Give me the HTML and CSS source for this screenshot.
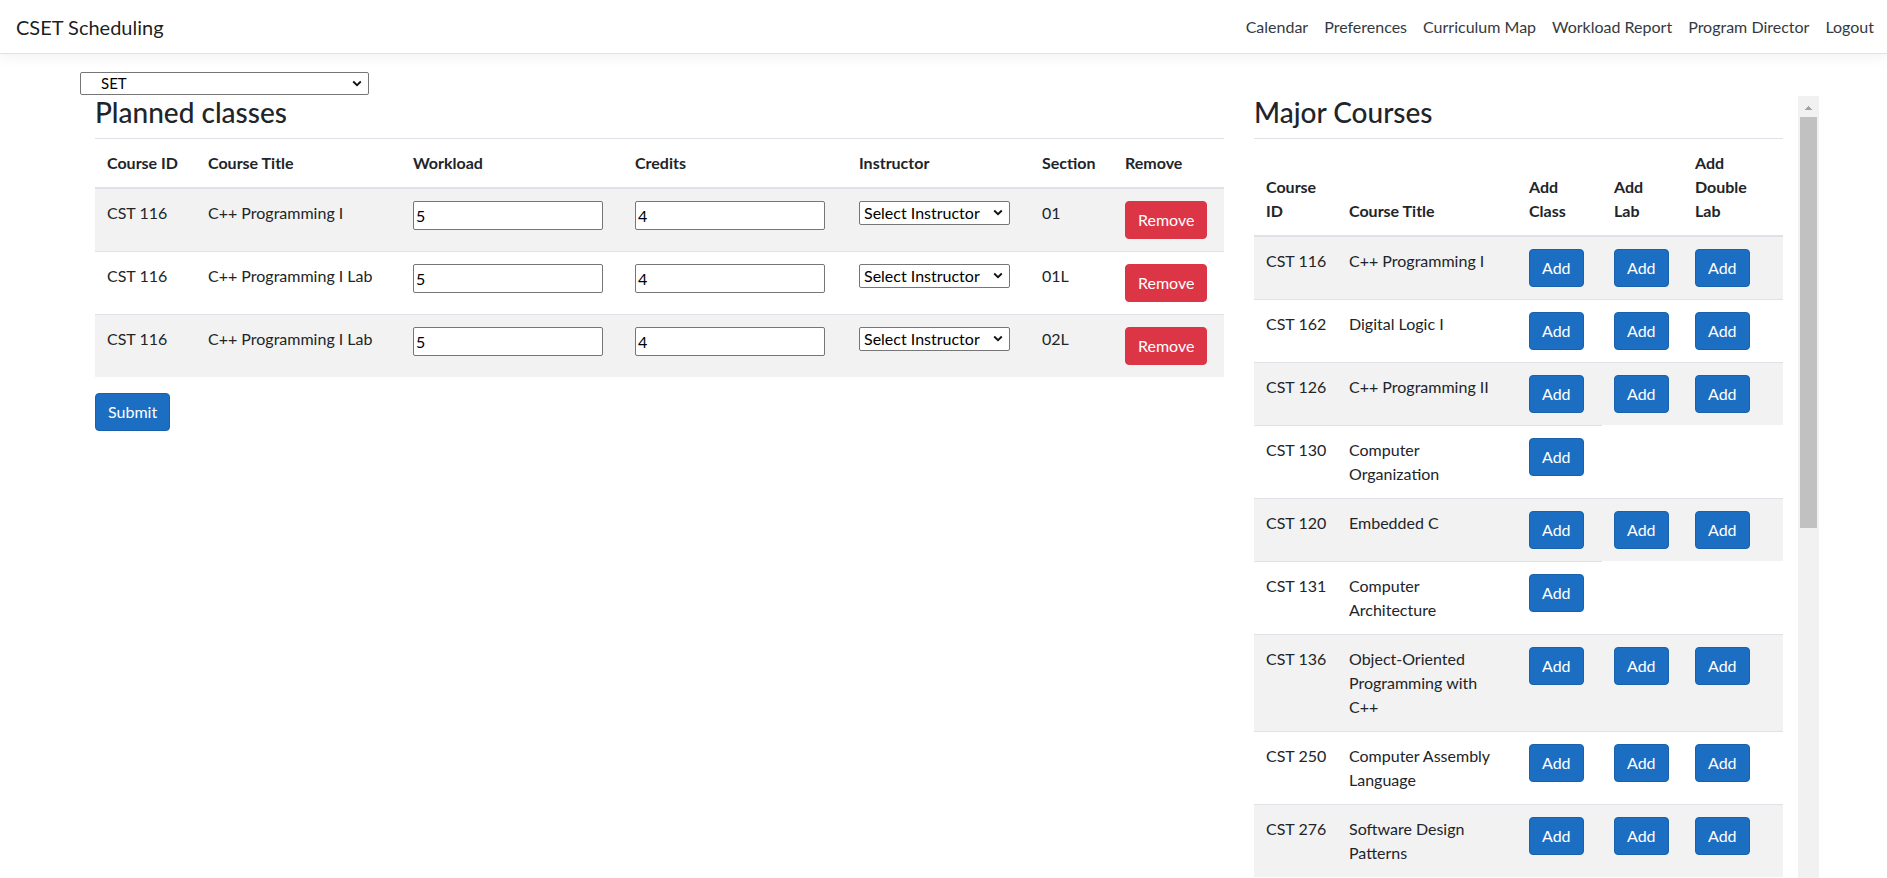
FILE: index.html
```html
<!DOCTYPE html>
<html lang="en">
<head>
<meta charset="utf-8">
<title>CSET Scheduling</title>
<link rel="stylesheet" href="styles.css">
</head>
<body>
<header class="navbar">
  <a class="brand" href="#">CSET Scheduling</a>
  <ul class="nav">
    <li><a class="nav-link" href="#">Calendar</a></li>
    <li><a class="nav-link" href="#">Preferences</a></li>
    <li><a class="nav-link" href="#">Curriculum Map</a></li>
    <li><a class="nav-link" href="#">Workload Report</a></li>
    <li><a class="nav-link" href="#">Program Director</a></li>
    <li><a class="nav-link" href="#">Logout</a></li>
  </ul>
</header>

<main class="page">
  <div class="toolbar">
    <span class="select-wrap">
      <select class="dept-select"><option>SET</option></select>
      <svg class="chevron" width="10" height="7" viewBox="0 0 10 7"><polyline points="1.2,1.5 5,5.2 8.8,1.5" fill="none" stroke="#111" stroke-width="1.8"/></svg>
    </span>
  </div>

  <div class="columns">
    <section class="planned">
      <h3>Planned classes</h3>
      <table class="table">
        <colgroup>
          <col class="pc-id"><col class="pc-title"><col class="pc-work"><col class="pc-cred"><col class="pc-inst"><col class="pc-sec"><col class="pc-rem">
        </colgroup>
        <thead>
          <tr><th>Course ID</th><th>Course Title</th><th>Workload</th><th>Credits</th><th>Instructor</th><th>Section</th><th>Remove</th></tr>
        </thead>
        <tbody>
          <tr>
            <td class="course-id">CST 116</td><td>C++ Programming I</td>
            <td><input class="field" type="text" value="5"></td>
            <td><input class="field" type="text" value="4"></td>
            <td><span class="select-wrap"><select class="inst-select"><option>Select Instructor</option></select><svg class="chevron" width="10" height="7" viewBox="0 0 10 7"><polyline points="1.2,1.5 5,5.2 8.8,1.5" fill="none" stroke="#111" stroke-width="1.8"/></svg></span></td>
            <td>01</td>
            <td><button class="btn btn-danger">Remove</button></td>
          </tr>
          <tr>
            <td class="course-id">CST 116</td><td>C++ Programming I Lab</td>
            <td><input class="field" type="text" value="5"></td>
            <td><input class="field" type="text" value="4"></td>
            <td><span class="select-wrap"><select class="inst-select"><option>Select Instructor</option></select><svg class="chevron" width="10" height="7" viewBox="0 0 10 7"><polyline points="1.2,1.5 5,5.2 8.8,1.5" fill="none" stroke="#111" stroke-width="1.8"/></svg></span></td>
            <td>01L</td>
            <td><button class="btn btn-danger">Remove</button></td>
          </tr>
          <tr>
            <td class="course-id">CST 116</td><td>C++ Programming I Lab</td>
            <td><input class="field" type="text" value="5"></td>
            <td><input class="field" type="text" value="4"></td>
            <td><span class="select-wrap"><select class="inst-select"><option>Select Instructor</option></select><svg class="chevron" width="10" height="7" viewBox="0 0 10 7"><polyline points="1.2,1.5 5,5.2 8.8,1.5" fill="none" stroke="#111" stroke-width="1.8"/></svg></span></td>
            <td>02L</td>
            <td><button class="btn btn-danger">Remove</button></td>
          </tr>
        </tbody>
      </table>
      <button class="btn btn-primary">Submit</button>
    </section>

    <section class="major">
      <div class="major-scroll">
        <h3>Major Courses</h3>
        <table class="table">
          <colgroup>
            <col class="mc-id"><col class="mc-title"><col class="mc-add1"><col class="mc-add2"><col class="mc-add3">
          </colgroup>
          <thead>
            <tr><th>Course ID</th><th>Course Title</th><th>Add Class</th><th>Add Lab</th><th>Add Double Lab</th></tr>
          </thead>
          <tbody>
            <tr><td class="course-id">CST 116</td><td>C++ Programming I</td><td><button class="btn btn-primary">Add</button></td><td><button class="btn btn-primary">Add</button></td><td><button class="btn btn-primary">Add</button></td></tr>
            <tr><td class="course-id">CST 162</td><td>Digital Logic I</td><td><button class="btn btn-primary">Add</button></td><td><button class="btn btn-primary">Add</button></td><td><button class="btn btn-primary">Add</button></td></tr>
            <tr><td class="course-id">CST 126</td><td>C++ Programming II</td><td><button class="btn btn-primary">Add</button></td><td><button class="btn btn-primary">Add</button></td><td><button class="btn btn-primary">Add</button></td></tr>
            <tr><td class="course-id">CST 130</td><td>Computer Organization</td><td><button class="btn btn-primary">Add</button></td></tr>
            <tr><td class="course-id">CST 120</td><td>Embedded C</td><td><button class="btn btn-primary">Add</button></td><td><button class="btn btn-primary">Add</button></td><td><button class="btn btn-primary">Add</button></td></tr>
            <tr><td class="course-id">CST 131</td><td>Computer Architecture</td><td><button class="btn btn-primary">Add</button></td></tr>
            <tr><td class="course-id">CST 136</td><td>Object-Oriented Programming with C++</td><td><button class="btn btn-primary">Add</button></td><td><button class="btn btn-primary">Add</button></td><td><button class="btn btn-primary">Add</button></td></tr>
            <tr><td class="course-id">CST 250</td><td>Computer Assembly Language</td><td><button class="btn btn-primary">Add</button></td><td><button class="btn btn-primary">Add</button></td><td><button class="btn btn-primary">Add</button></td></tr>
            <tr><td class="course-id">CST 276</td><td>Software Design Patterns</td><td><button class="btn btn-primary">Add</button></td><td><button class="btn btn-primary">Add</button></td><td><button class="btn btn-primary">Add</button></td></tr>
          </tbody>
        </table>
      </div>
      <div class="scrollbar" aria-hidden="true">
        <div class="sb-up"></div>
        <div class="sb-thumb"></div>
      </div>
    </section>
  </div>
</main>
</body>
</html>
```
FILE: styles.css
```css
* {
  box-sizing: border-box;
}

html,
body {
  margin: 0;
  height: 100%;
  overflow: hidden;
}

body {
  font-family: Lato, "Open Sans", sans-serif;
  font-size: 16px;
  line-height: 1.5;
  color: #212529;
  background: #fff;
}

/* ---------- navbar ---------- */
.navbar {
  position: relative;
  z-index: 2;
  height: 54px;
  display: flex;
  align-items: center;
  justify-content: space-between;
  padding: 0 5px 0 16px;
  background: #fff;
  border-bottom: 1px solid #dee2e6;
  box-shadow: 0 4px 12px rgba(0, 0, 0, 0.05);
}

.brand {
  font-size: 20px;
  line-height: 30px;
  color: rgba(0, 0, 0, 0.9);
  text-decoration: none;
}

.nav {
  display: flex;
  list-style: none;
  margin: 0;
  padding: 0;
}

.nav-link {
  display: block;
  padding: 8px;
  color: #343a40;
  text-decoration: none;
}

/* ---------- page ---------- */
.page {
  margin-left: 80px;
  width: 1739px;
  padding-top: 18px;
}

.toolbar {
  height: 24px;
}

.select-wrap {
  position: relative;
  display: inline-block;
  vertical-align: top;
}

.select-wrap .chevron {
  position: absolute;
  top: 50%;
  right: 7px;
  margin-top: -4px;
  pointer-events: none;
}

select {
  appearance: none;
  -webkit-appearance: none;
  margin: 0;
  font-family: inherit;
  color: #000;
  background: #fff;
  border: 1px solid #767676;
  border-radius: 2px;
}

.dept-select {
  display: block;
  width: 289px;
  height: 23px;
  padding: 0 0 0 20px;
  font-size: 15px;
  line-height: 21px;
}

.inst-select {
  display: block;
  width: 151px;
  height: 24px;
  padding: 0 0 0 4px;
  font-size: 16px;
  line-height: 22px;
}

.columns {
  display: flex;
  align-items: flex-start;
}

.planned {
  width: 1159px;
  padding: 0 15px;
}

.major {
  display: flex;
  width: 580px;
  height: 782px;
  overflow: hidden;
}

.major-scroll {
  flex: 1;
  min-width: 0;
  padding: 0 15px;
  overflow: hidden;
}

.scrollbar {
  flex: 0 0 21px;
  display: flex;
  flex-direction: column;
  background: #f1f1f1;
}

.sb-up {
  height: 21px;
  background:
    linear-gradient(to top left, #a3a3a3 50%, transparent 50%) 6px 9px / 5px 5px no-repeat,
    linear-gradient(to top right, #a3a3a3 50%, transparent 50%) 10px 9px / 5px 5px no-repeat;
}

.sb-thumb {
  height: 411px;
  margin: 0 2px;
  background: #c1c1c1;
}

h3 {
  margin: 0 0 8px;
  font-size: 28px;
  font-weight: 500;
  line-height: 1.2;
  color: #212529;
}

/* ---------- tables ---------- */
.table {
  width: 100%;
  table-layout: fixed;
  border-collapse: collapse;
  margin-bottom: 16px;
}

.table th,
.table td {
  padding: 12px;
  text-align: left;
  vertical-align: top;
  border-top: 1px solid #dee2e6;
}

.table thead th {
  vertical-align: bottom;
  font-weight: 700;
  border-bottom: 2px solid #dee2e6;
}

.table tbody tr:nth-child(odd) {
  background: rgba(0, 0, 0, 0.05);
}

.table .course-id {
  white-space: nowrap;
}

.pc-id { width: 101px; }
.pc-title { width: 205px; }
.pc-work { width: 222px; }
.pc-cred { width: 224px; }
.pc-inst { width: 183px; }
.pc-sec { width: 83px; }
.pc-rem { width: 111px; }

.mc-id { width: 83px; }
.mc-title { width: 180px; }
.mc-add1 { width: 85px; }
.mc-add2 { width: 81px; }
.mc-add3 { width: 100px; }

.field {
  display: block;
  width: 190px;
  height: 29px;
  margin: 0;
  padding: 1px 2px;
  font-family: inherit;
  font-size: 16px;
  line-height: 24px;
  color: #000;
  background: #fff;
  border: 1px solid #767676;
  border-radius: 2px;
}

/* ---------- buttons ---------- */
.btn {
  display: inline-block;
  vertical-align: top;
  margin: 0;
  padding: 6px 12px;
  font-family: inherit;
  font-size: 16px;
  line-height: 24px;
  color: #fff;
  border: 1px solid transparent;
  border-radius: 4px;
  cursor: pointer;
}

.btn-primary {
  background: #1b6ec2;
  border-color: #1861ac;
}

.btn-danger {
  background: #dc3545;
  border-color: #dc3545;
}
```
